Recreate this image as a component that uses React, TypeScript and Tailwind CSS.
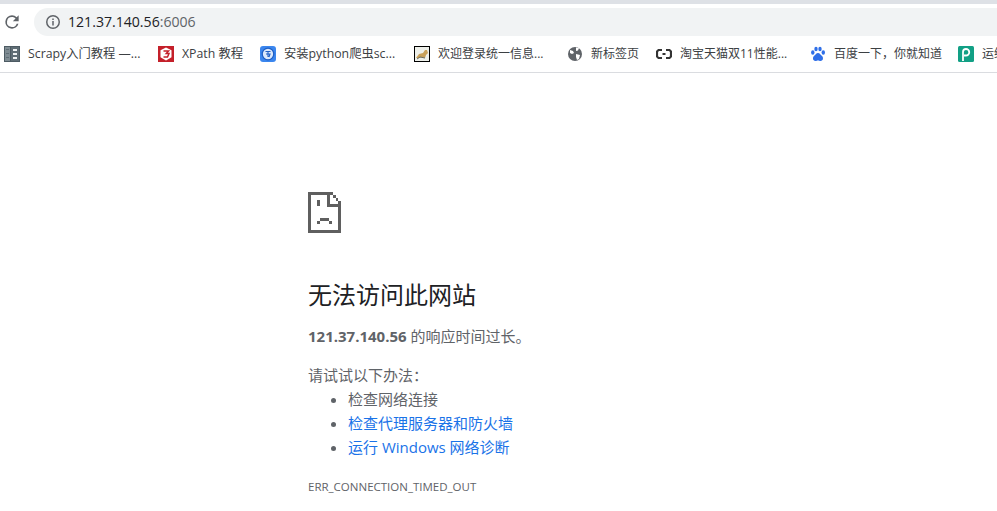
const font = "font-['Open_Sans','Noto_Sans_CJK_SC',sans-serif]";

function Favicon({ name }: { name: string }) {
  switch (name) {
    case "book":
      return (
        <svg width="16" height="16" viewBox="0 0 16 16">
          <rect width="16" height="16" fill="#4d5b63" />
          <rect x="1" y="1" width="5" height="14" fill="#7f8c93" />
          <rect x="7" y="1" width="8" height="14" fill="#5f6d75" />
          <path d="M9 3h4v2H9zM9 7h4v2H9zM9 11h4v2H9z" fill="#eef1f2" />
          <path d="M2 3h3v1H2zM2 7h3v1H2zM2 11h3v1H2z" fill="#5f6d75" />
        </svg>
      );
    case "xpath":
      return (
        <svg width="16" height="16" viewBox="0 0 16 16">
          <rect width="16" height="16" fill="#c4202a" />
          <path d="M8 1.500l5.500 2.800v7L8 14.500l-5.500-3.200v-7z" fill="#fff" />
          <path d="M5.500 5h5L8.300 7.500H11L9.500 11H5.500" fill="none" stroke="#c4202a" strokeWidth="1.500" />
        </svg>
      );
    case "python":
      return (
        <svg width="16" height="16" viewBox="0 0 16 16">
          <rect width="16" height="16" rx="3" fill="#3b86ee" />
          <circle cx="8" cy="8" r="5.800" fill="#dbe8fb" stroke="#1f5fc4" strokeWidth="1.300" />
          <path d="M5.500 5.500h5M8 5.500v5.500M6 8h4l-1 3" fill="none" stroke="#1f5fc4" strokeWidth="1.100" />
        </svg>
      );
    case "tomcat":
      return (
        <svg width="16" height="16" viewBox="0 0 16 16">
          <rect x="0.500" y="0.500" width="15" height="15" fill="#eef0ea" stroke="#000" />
          <path d="M2 12l3-4 4-1 2-3 2 0 1 3-2 2-1 3-3-1-3 1z" fill="#c9a15a" />
          <path d="M3 13l3-2 5 1" fill="none" stroke="#6b6b5e" />
        </svg>
      );
    case "globe":
      return (
        <svg width="16" height="16" viewBox="0 0 16 16">
          <circle cx="8" cy="8" r="7" fill="#5f6368" />
          <path d="M3 4l3 1 1 2-2 1-2-1zM9 1.500l3 .5-1 2.500-2 .5zM9 8l4 1-1 4-2 1-1-3z" fill="#fff" />
        </svg>
      );
    case "taobao":
      return (
        <svg width="16" height="16" viewBox="0 0 16 16">
          <path d="M6 4H2.500L1 5.500v5L2.500 12H6M10 4h3.500L15 5.500v5L13.500 12H10" fill="none" stroke="#333" strokeWidth="2.200" />
          <rect x="6.500" y="7" width="3" height="2" fill="#333" />
        </svg>
      );
    case "baidu":
      return (
        <svg width="16" height="16" viewBox="0 0 16 16" fill="#2f6fe8">
          <ellipse cx="2.800" cy="6.500" rx="1.700" ry="2.200" />
          <ellipse cx="6" cy="3" rx="1.700" ry="2.300" />
          <ellipse cx="10" cy="3" rx="1.700" ry="2.300" />
          <ellipse cx="13.300" cy="6.500" rx="1.700" ry="2.200" />
          <path d="M8 7c2 0 2.500 2 4 3s1.500 5-1.500 5c-1 0-1.500-.5-2.500-.5S6.500 15 5.500 15C2.500 15 2.500 11 4 10s2-3 4-3z" />
        </svg>
      );
    default:
      return (
        <svg width="16" height="16" viewBox="0 0 16 16">
          <rect width="16" height="16" rx="1.500" fill="#12a085" />
          <path d="M5 15V6a3 3 0 0 1 3-3h0a3.200 3.200 0 0 1 0 6.500H6" fill="none" stroke="#fff" strokeWidth="1.800" />
        </svg>
      );
  }
}

const bookmarks = [
  { icon: "book", label: "Scrapy入门教程 —...", width: "w-[154px]", size: "text-[12.3px]" },
  { icon: "xpath", label: "XPath 教程", width: "w-[102px]", size: "text-[12.3px]" },
  { icon: "python", label: "安装python爬虫sc...", width: "w-[154px]", size: "text-[12.3px]" },
  { icon: "tomcat", label: "欢迎登录统一信息...", width: "w-[153px]", size: "text-[12px]" },
  { icon: "globe", label: "新标签页", width: "w-[89px]", size: "text-[12px]" },
  { icon: "taobao", label: "淘宝天猫双11性能...", width: "w-[154px]", size: "text-[12px]" },
  { icon: "baidu", label: "百度一下，你就知道", width: "w-[148px]", size: "text-[12px]" },
  { icon: "p", label: "运维", width: "w-[60px]", size: "text-[12px]" },
];

function SadPage() {
  return (
    <svg width="33" height="41" viewBox="0 0 33 41" shapeRendering="crispEdges" fill="#5f5f5f">
      <path d="M0 0h22v3H3v35h27V15h3v26H0z" />
      <path d="M19 0h3v12h11v3H19z" />
      <path d="M22 0h3v3h-3zM25 3h3v3h-3zM28 6h2v3h-2zM30 9h3v3h-3z" />
      <rect x="9" y="8" width="3" height="6" />
      <path d="M12 26h9v3h3v3h-3v-3h-9v3H9v-3h3z" />
    </svg>
  );
}

export default function App() {
  return (
    <div className={`flex h-[511px] w-[997px] flex-col overflow-hidden bg-white ${font}`}>
      <div className="h-1 bg-[#dee1e6]" />
      <div className="flex h-8 items-center pt-1">
        <svg width="20" height="20" viewBox="0 0 24 24" className="ml-[2px] shrink-0" fill="#5f6368">
          <path d="M17.650 6.350A7.958 7.958 0 0 0 12 4a8 8 0 1 0 7.730 10h-2.080A6 6 0 1 1 12 6c1.660 0 3.140.690 4.220 1.780L13 11h7V4l-2.350 2.350z" />
        </svg>
        <div className="ml-3 flex h-7 flex-1 items-center rounded-l-full bg-[#f1f3f4] pl-[11px]">
          <svg width="16" height="16" viewBox="0 0 16 16" fill="none" stroke="#5f6368">
            <circle cx="8" cy="8" r="6.250" strokeWidth="1.500" />
            <path d="M8 7v4.500M8 4.500v1.500" strokeWidth="1.500" />
          </svg>
          <span className="ml-[7px] text-[14.1px] text-[#202124]">
            121.37.140.56<span className="text-[#5f6368]">:6006</span>
          </span>
        </div>
      </div>
      <div className="flex h-[37px] items-center overflow-hidden border-b border-[#dadce0] pl-1 text-[#3c4043]">
        {bookmarks.map((b) => (
          <div key={b.label} className={`flex shrink-0 items-center gap-2 ${b.width} ${b.size}`}>
            <Favicon name={b.icon} />
            <span className="whitespace-nowrap">{b.label}</span>
          </div>
        ))}
      </div>
      <main className="pl-[308px] pt-[119px] text-[#5f6368]">
        <SadPage />
        <h1 className="mt-[45px] text-[24px] leading-[34px] font-normal text-[#202124]">无法访问此网站</h1>
        <p className="mt-3 text-[15px] leading-[24px]">
          <strong>121.37.140.56</strong> 的响应时间过长。
        </p>
        <p className="mt-[15px] text-[15px] leading-[24px]">请试试以下办法：</p>
        <ul className="list-disc pl-10 text-[15px] leading-[24px]">
          <li>检查网络连接</li>
          <li><a className="text-[#1a73e8]">检查代理服务器和防火墙</a></li>
          <li><a className="text-[#1a73e8]">运行 Windows 网络诊断</a></li>
        </ul>
        <p className="mt-5 text-[11.5px] leading-[16px]">ERR_CONNECTION_TIMED_OUT</p>
      </main>
    </div>
  );
}
